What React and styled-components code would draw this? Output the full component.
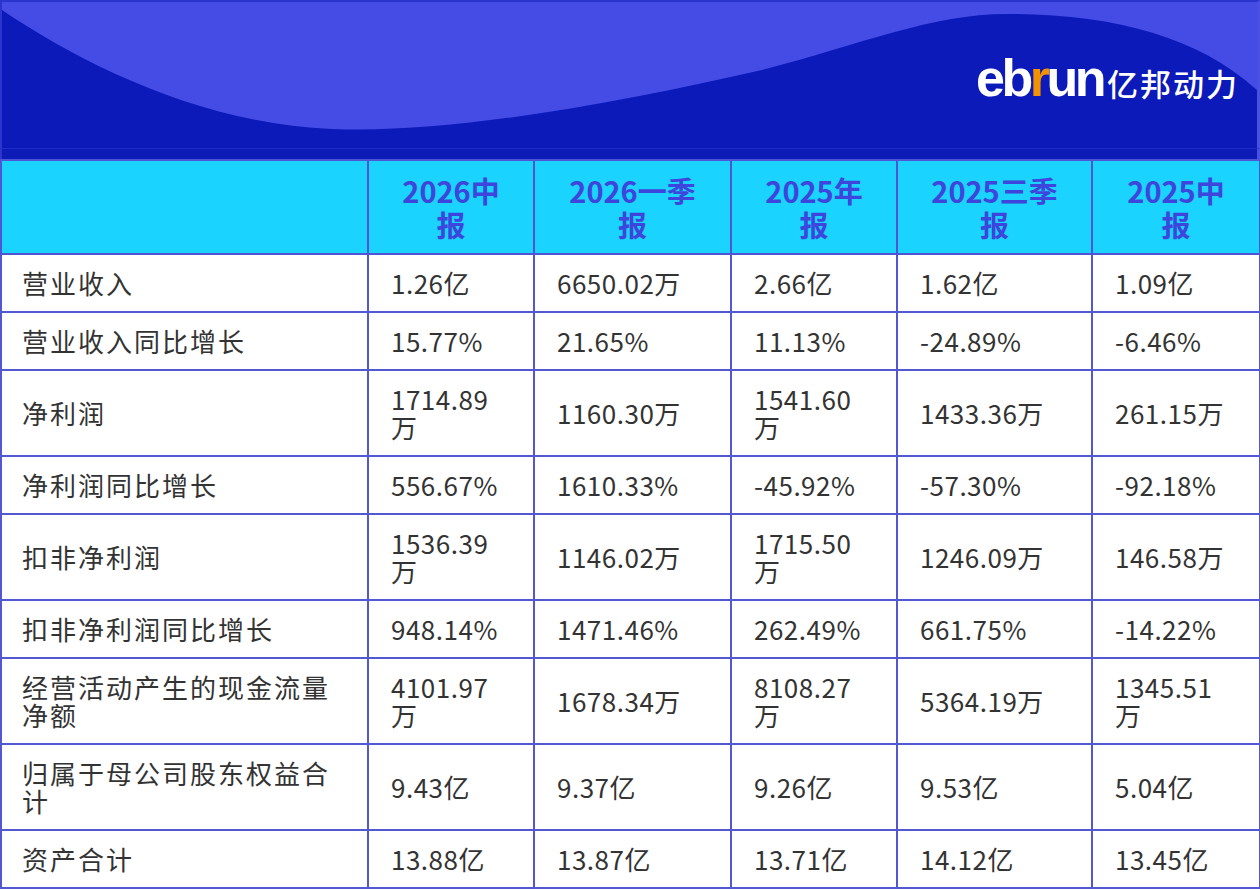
import React from "react";
import styled, { createGlobalStyle } from "styled-components";

const GlobalStyle = createGlobalStyle`
  body {
    margin: 0;
    background: #ffffff;
    font-family: "Noto Sans CJK SC", "Noto Sans", sans-serif;
  }
`;

const Frame = styled.div`
  width: 1260px;
  height: 890px;
  overflow: hidden;
  box-sizing: border-box;
  background: #ffffff;
`;

const Banner = styled.div`
  position: relative;
  height: 148px;
  box-sizing: border-box;
  background: #0b1ab8;
  border-top: 2px solid #2c34ce;
  border-left: 2px solid #2c34ce;
  border-right: 3px solid #4a50e0;
  display: flex;
  justify-content: flex-end;
  align-items: flex-start;
  padding: 50px 18px 0 0;
  overflow: hidden;
`;

const Wave = styled.svg`
  position: absolute;
  inset: 0;
  width: 100%;
  height: 100%;
`;

const Strip = styled.div`
  height: 10px;
  background: #0d1cb7;
  border-top: 1px solid #1d2cc4;
  border-left: 2px solid #2c34ce;
  border-right: 3px solid #4a50e0;
`;

const Logo = styled.div`
  position: relative;
  display: flex;
  align-items: baseline;
  color: #ffffff;
`;

const LogoWord = styled.span`
  font-family: "Liberation Sans", Arial, sans-serif;
  font-weight: 700;
  font-size: 52px;
  letter-spacing: -3.5px;
  line-height: 1;
`;

const LogoR = styled.span`
  color: #f39200;
`;

const LogoCn = styled.span`
  font-family: "Noto Sans CJK SC", sans-serif;
  font-weight: 500;
  font-size: 31px;
  letter-spacing: 2px;
  margin-left: 4px;
  line-height: 1;
`;

const Table = styled.table`
  width: 1259px;
  table-layout: fixed;
  border-collapse: collapse;
  color: #333333;
`;

const HeadCell = styled.th`
  background: #1ad3fe;
  color: #3e45dc;
  font-size: 29px;
  font-weight: 700;
  line-height: 34px;
  padding: 12px 22px;
  text-align: center;
  border: 2px solid #4f55d4;
`;

const Cell = styled.td`
  font-size: 26px;
  font-weight: 400;
  line-height: 28px;
  letter-spacing: ${(p) => (p.label ? "2px" : "0.5px")};
  padding: 14px 22px 14px ${(p) => (p.label ? "20px" : "22px")};
  text-align: left;
  vertical-align: middle;
  border: 2px solid #5457d2;
  word-break: break-all;
`;

const columns = ["2026中报", "2026一季报", "2025年报", "2025三季报", "2025中报"];
const widths = [367, 166, 197, 166, 195, 168];

const rows = [
  ["营业收入", ["1.26亿", "6650.02万", "2.66亿", "1.62亿", "1.09亿"]],
  ["营业收入同比增长", ["15.77%", "21.65%", "11.13%", "-24.89%", "-6.46%"]],
  ["净利润", ["1714.89万", "1160.30万", "1541.60万", "1433.36万", "261.15万"]],
  ["净利润同比增长", ["556.67%", "1610.33%", "-45.92%", "-57.30%", "-92.18%"]],
  ["扣非净利润", ["1536.39万", "1146.02万", "1715.50万", "1246.09万", "146.58万"]],
  ["扣非净利润同比增长", ["948.14%", "1471.46%", "262.49%", "661.75%", "-14.22%"]],
  ["经营活动产生的现金流量净额", ["4101.97万", "1678.34万", "8108.27万", "5364.19万", "1345.51万"]],
  ["归属于母公司股东权益合计", ["9.43亿", "9.37亿", "9.26亿", "9.53亿", "5.04亿"]],
  ["资产合计", ["13.88亿", "13.87亿", "13.71亿", "14.12亿", "13.45亿"]],
];

function App() {
  return (
    <>
      <GlobalStyle />
      <Frame>
        <Banner>
          <Wave viewBox="0 0 1255 146" preserveAspectRatio="none">
            <path
              d="M0,8 C80,62 200,122 330,127 C450,132 620,100 760,68 C860,42 930,12 1005,12 C1110,12 1195,34 1255,88 L1255,0 L0,0 Z"
              fill="#454ce6"
            />
          </Wave>
          <Logo>
            <LogoWord>
              eb<LogoR>r</LogoR>un
            </LogoWord>
            <LogoCn>亿邦动力</LogoCn>
          </Logo>
        </Banner>
        <Strip />
        <Table>
          <colgroup>
            {widths.map((w, i) => (
              <col key={i} style={{ width: w }} />
            ))}
          </colgroup>
          <thead>
            <tr>
              <HeadCell />
              {columns.map((c) => (
                <HeadCell key={c}>{c}</HeadCell>
              ))}
            </tr>
          </thead>
          <tbody>
            {rows.map(([label, values]) => (
              <tr key={label}>
                <Cell label>{label}</Cell>
                {values.map((v, i) => (
                  <Cell key={i}>{v}</Cell>
                ))}
              </tr>
            ))}
          </tbody>
        </Table>
      </Frame>
    </>
  );
}

export default App;
